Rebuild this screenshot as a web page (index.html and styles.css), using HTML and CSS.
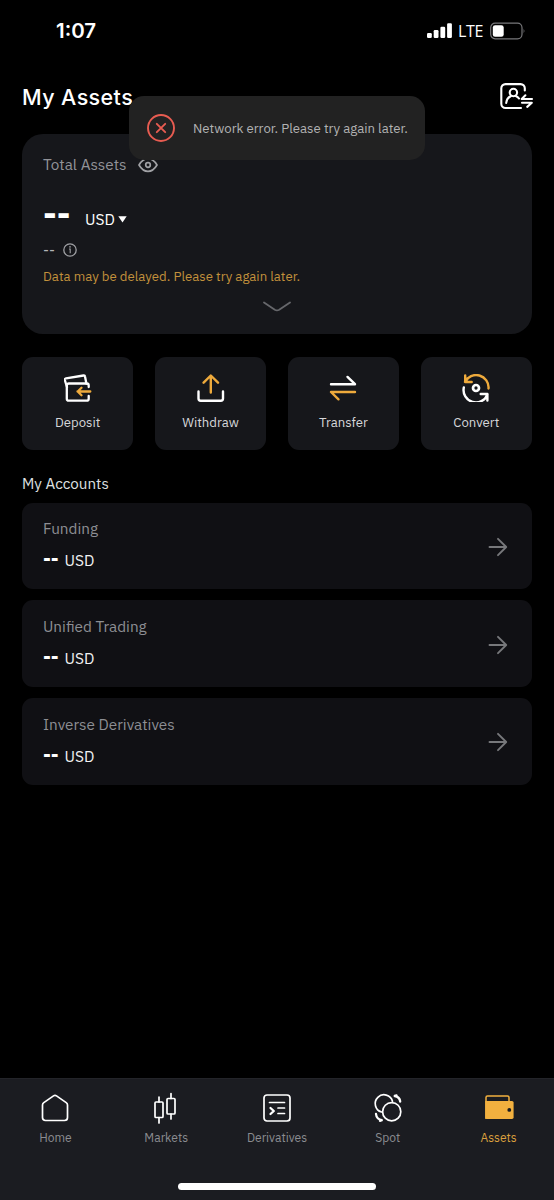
FILE: index.html
```
<!DOCTYPE html>
<html lang="en">
<head>
<meta charset="utf-8">
<title>My Assets</title>
<link rel="stylesheet" href="styles.css">
</head>
<body>
<div class="screen">
  <div class="status">
    <span class="time">1:07</span>
    <div class="signals">
      <svg width="26" height="18" viewBox="0 0 26 18" fill="#fff"><rect x="0" y="11" width="4.8" height="5" rx="1.2"/><rect x="6.7" y="8" width="4.8" height="8" rx="1.2"/><rect x="13.4" y="4.7" width="4.8" height="11.3" rx="1.2"/><rect x="20.1" y="1.2" width="4.8" height="14.8" rx="1.2"/></svg>
      <span class="lte">LTE</span>
      <svg width="36" height="18" viewBox="0 0 36 18"><rect x=".7" y="1.2" width="31.3" height="15.6" rx="4.5" fill="none" stroke="#77777a" stroke-width="1.2"/><rect x="2.8" y="3.2" width="10.9" height="11.6" rx="2.3" fill="#fff"/><path d="M33.6 6.5q1.8 2.500 0 5z" fill="#77777a"/></svg>
    </div>
  </div>

  <header class="header">
    <h1 class="title">My Assets</h1>
    <svg width="34" height="28" viewBox="0 0 34 28" fill="none" stroke="#fff" stroke-width="2.100" stroke-linecap="round" stroke-linejoin="round"><path d="M24.800 7.500V5.300a4.200 4.200 0 0 0-4.200-4.200H5.500a4.200 4.200 0 0 0-4.200 4.200v15.500a4.200 4.200 0 0 0 4.200 4.200H21"/><circle cx="13.400" cy="9.500" r="3.700"/><path d="M6.200 20c.3-3.300 1.800-5.600 4.800-7M15.800 13c1.500.6 2.400 1.300 3.200 2.500"/><path d="M25.400 12.300l-3.700 3.700H32M22 19.800h9.800l-4.600 4.100"/></svg>
  </header>

  <section class="balance">
    <div class="balance-label"><span class="total">Total Assets</span>
      <svg width="20" height="16" viewBox="0 0 20 16" fill="none" stroke="#a0a1a5" stroke-width="1.700"><path d="M1 8c2.600-4.400 5.600-6.400 9-6.400S16.400 3.600 19 8c-2.600 4.400-5.600 6.400-9 6.400S3.600 12.400 1 8z" stroke-linejoin="round"/><circle cx="10" cy="8" r="2.300"/></svg>
    </div>
    <div class="amount"><span class="amount-value">--</span><span class="currency">USD</span><svg width="9" height="7" viewBox="0 0 9 7"><path d="M.3.3h8.400L4.500 6.500z" fill="#fff"/></svg></div>
    <div class="secondary"><span class="secondary-value">--</span>
      <svg width="14" height="14" viewBox="0 0 14 14"><circle cx="7" cy="7" r="6.200" fill="none" stroke="#a0a1a5" stroke-width="1.300"/><path d="M6 6h1.200v4.200" fill="none" stroke="#a0a1a5" stroke-width="1.100"/><circle cx="7" cy="3.900" r=".8" fill="#a0a1a5"/></svg>
    </div>
    <p class="warning">Data may be delayed. Please try again later.</p>
    <svg class="expand" width="30" height="12" viewBox="0 0 30 12" fill="none" stroke="#66676b" stroke-width="1.900" stroke-linecap="round"><path d="M2 1.500l10.800 7.200q2.200 1.300 4.400 0L28 1.500"/></svg>
  </section>

  <section class="actions">
    <div class="action">
      <svg width="28" height="28" viewBox="0 0 28 28" fill="none" stroke="#fff" stroke-width="2.300" stroke-linecap="round" stroke-linejoin="round"><path d="M22.400 9.500L21 2.500q-.2-1.200-1.500-1L2 4.300q-1.500.3-1.200 1.700L3 13"/><path d="M24.700 13V11.500q0-2-2-2H4.800q-2 0-2 2v13.200q0 2 2 2h17.900q2 0 2-2V22"/><path d="M26.300 17.500H13.500M17.500 13.700l-3.800 3.800 3.800 3.800" stroke="#eeaa3c"/></svg>
      <span class="action-name">Deposit</span>
    </div>
    <div class="action">
      <svg width="28" height="28" viewBox="0 0 28 28" fill="none" stroke="#fff" stroke-width="2.400" stroke-linecap="round" stroke-linejoin="round"><path d="M1.500 17.500v7q0 2.200 2.200 2.200h20.100q2.200 0 2.200-2.200v-7"/><path d="M13.800 18.500V2M6.600 8.700l7.200-7.200 7.200 7.200" stroke="#eeaa3c"/></svg>
      <span class="action-name">Withdraw</span>
    </div>
    <div class="action">
      <svg width="28" height="28" viewBox="0 0 28 28" fill="none" stroke="#fff" stroke-width="2.400" stroke-linecap="round" stroke-linejoin="round"><path d="M2 10.200h24l-7.500-7.300"/><path d="M26 18H2l7.500 7.300" stroke="#eeaa3c"/></svg>
      <span class="action-name">Transfer</span>
    </div>
    <div class="action">
      <svg width="28" height="28" viewBox="0 0 28 28" fill="none" stroke="#fff" stroke-width="2.400" stroke-linecap="round" stroke-linejoin="round"><circle cx="14" cy="14" r="3" stroke-width="2.700"/><path d="M3 8A12.400 12.400 0 0 1 26.500 14.500M3.200 1.500V8h6.500" stroke="#eeaa3c"/><path d="M1.800 13.500A12.400 12.400 0 0 0 25.500 20.500M18.700 20h6.700v6.600"/></svg>
      <span class="action-name">Convert</span>
    </div>
  </section>

  <h2 class="accounts-title">My Accounts</h2>
  <section class="accounts">
    <div class="account">
      <div class="account-info"><span class="account-name">Funding</span><div class="account-value"><b class="dashes">--</b><span class="unit">USD</span></div></div>
      <svg width="20" height="20" viewBox="0 0 20 20" class="arrow"><path d="M1.500 10h16.500M10 1.800L18.200 10 10 18.200"/></svg>
    </div>
    <div class="account">
      <div class="account-info"><span class="account-name">Unified Trading</span><div class="account-value"><b class="dashes">--</b><span class="unit">USD</span></div></div>
      <svg width="20" height="20" viewBox="0 0 20 20" class="arrow"><path d="M1.500 10h16.500M10 1.800L18.200 10 10 18.200"/></svg>
    </div>
    <div class="account">
      <div class="account-info"><span class="account-name">Inverse Derivatives</span><div class="account-value"><b class="dashes">--</b><span class="unit">USD</span></div></div>
      <svg width="20" height="20" viewBox="0 0 20 20" class="arrow"><path d="M1.500 10h16.500M10 1.800L18.200 10 10 18.200"/></svg>
    </div>
  </section>

  <footer class="footer">
    <nav class="tabs">
      <div class="tab"><svg width="32" height="32" viewBox="0 0 32 32" class="tab-icon"><path d="M3.500 13q0-1.500 1.300-2.400l9.700-6.700q1.500-1 3 0l9.700 6.700q1.300.9 1.300 2.400v12.500q0 3-3 3h-19q-3 0-3-3z"/></svg><span>Home</span></div>
      <div class="tab"><svg width="32" height="32" viewBox="0 0 32 32" class="tab-icon"><rect x="5" y="10" width="8" height="15.500" rx="1"/><path d="M9 5v5M9 25.500V31M21 1.500v5M21 22v5"/><rect x="17" y="6.500" width="8" height="15.500" rx="1"/></svg><span>Markets</span></div>
      <div class="tab"><svg width="32" height="32" viewBox="0 0 32 32" class="tab-icon"><rect x="3" y="3" width="26" height="26" rx="3"/><path d="M8.500 10.500h15M17 16h6.500M17 21.500h6.500"/><path d="M9.500 16l3.300 3-3.300 3" stroke-width="2.300"/></svg><span>Derivatives</span></div>
      <div class="tab"><svg width="32" height="32" viewBox="0 0 32 32" class="tab-icon"><path d="M20.500 9.200A8.800 8.800 0 1 0 9.500 20"/><circle cx="19.700" cy="19.700" r="9.100"/><path d="M22.700 4q5 1 5.500 5.500M24.500 3.400l-1.800.6M4 22q.5 5 5.800 6.200M9.800 28.200l-1.800.6" stroke-width="2.300"/></svg><span>Spot</span></div>
      <div class="tab active"><svg width="32" height="32" viewBox="0 0 32 32" fill="#f2b03f"><path d="M3 27V5.500q0-1.500 1.500-1.500h20q1.500 0 1.500 1.500V9" fill="none" stroke="#f2b03f" stroke-width="1.500"/><path d="M2.200 9H29q1.600 0 1.600 1.600v14.700q0 1.600-1.600 1.600H3.800q-1.600 0-1.600-1.600z"/><circle cx="26.300" cy="17.900" r="1.900" fill="#191a1f"/></svg><span>Assets</span></div>
    </nav>
    <div class="home-indicator"></div>
  </footer>

  <div class="toast">
    <svg width="28" height="28" viewBox="0 0 28 28" fill="none" stroke="#e85c51" stroke-linecap="round"><circle cx="14" cy="14" r="13" stroke-width="1.900"/><path d="M9.800 9.800l8.400 8.400M18.200 9.800l-8.400 8.400" stroke-width="1.900"/></svg>
    <span class="toast-text">Network error. Please try again later.</span>
  </div>
</div>
</body>
</html>
```
FILE: styles.css
```
* { box-sizing: border-box; }
body { margin: 0; background: #000; }
svg { display: block; flex: none; }
.screen {
  position: relative;
  display: flex;
  flex-direction: column;
  width: 554px;
  height: 1200px;
  overflow: hidden;
  background: #000;
  color: #fff;
  font-family: "IBM Plex Sans", Roboto, "Noto Sans", sans-serif;
  white-space: nowrap;
}
.status {
  display: flex;
  justify-content: space-between;
  align-items: center;
  height: 62px;
  padding: 0 28px 0 56px;
}
.time { font: 600 20.500px/24px Inter, sans-serif; }
.signals { display: flex; align-items: center; }
.lte { width: 30px; margin: -1px 2px 0 5px; font: 500 16px/20px "Open Sans", sans-serif; letter-spacing: -.3px; }
.header {
  display: flex;
  justify-content: space-between;
  align-items: center;
  height: 72px;
  padding: 0 20px 2px 22px;
}
.title { margin: 0; font: 500 21.500px/28px Inter, sans-serif; letter-spacing: .4px; }
.balance {
  height: 200px;
  margin: 0 22px;
  padding: 19px 21px 0;
  border-radius: 21px;
  background: #16171b;
}
.balance-label { display: flex; align-items: center; gap: 12px; height: 23px; }
.total { margin-top: -1px; font-size: 15.300px; color: #929398; }
.amount { display: flex; align-items: center; height: 32px; margin-top: 27px; }
.amount-value { width: 42px; font-size: 34px; font-weight: 700; line-height: 32px; margin-top: -12px; }
.currency { margin: -1px 3px 0 0; font-size: 15.500px; }
.secondary { display: flex; align-items: center; gap: 8px; height: 20px; margin-top: 5px; }
.secondary-value { width: 12px; margin-top: -2px; font-size: 15px; color: #b4b5b8; }
.warning { margin: 6px 0 0; font-size: 13.200px; line-height: 20px; color: #c2913c; }
.expand { margin: 15px auto 0; }
.actions {
  display: grid;
  grid-template-columns: repeat(4, 1fr);
  gap: 21.500px;
  height: 93px;
  margin: 22.500px 22px 0;
}
.action {
  display: flex;
  flex-direction: column;
  align-items: center;
  gap: 10px;
  padding-top: 17.500px;
  border-radius: 11px;
  background: #16171b;
}
.action-name { font-size: 13.200px; line-height: 20px; color: #d5d6d9; }
.accounts-title { margin: 23px 22px 0; font-size: 15.200px; font-weight: 400; line-height: 20px; color: #dfe0e2; }
.accounts { display: flex; flex-direction: column; gap: 11px; margin: 10px 22px 0; }
.account {
  display: flex;
  justify-content: space-between;
  align-items: center;
  height: 86.700px;
  padding: 0 24px 0 21px;
  border-radius: 11px;
  background: #101014;
}
.arrow { margin-top: 2px; fill: none; stroke: #77787b; stroke-width: 1.900; stroke-linecap: round; stroke-linejoin: round; }
.account-info { display: flex; flex-direction: column; gap: 10px; margin-top: -3px; }
.account-name { font-size: 15.300px; line-height: 22px; color: #8d8e93; }
.account-value { display: flex; align-items: center; height: 22px; }
.dashes { width: 21.500px; margin-top: -2px; font-size: 19.500px; line-height: 22px; }
.unit { font-size: 15.500px; color: #f2f2f3; }
.footer {
  height: 122px;
  margin-top: auto;
  border-top: 1px solid #232429;
  background: #1b1c21;
}
.tabs { display: grid; grid-template-columns: repeat(5, 1fr); height: 104px; }
.tab {
  display: flex;
  flex-direction: column;
  align-items: center;
  gap: 5px;
  padding-top: 13px;
  font-size: 12.100px;
  line-height: 18px;
  color: #8b8c91;
}
.tab.active { color: #dba03e; }
.tab-icon { fill: none; stroke: #fff; stroke-width: 1.700; stroke-linecap: round; stroke-linejoin: round; }
.home-indicator { width: 198px; height: 7px; margin: 0 auto; border-radius: 4px; background: #fff; }
.toast {
  position: absolute;
  top: 96px;
  left: 129px;
  display: flex;
  align-items: center;
  gap: 18px;
  width: 296px;
  height: 64px;
  padding-left: 18px;
  border-radius: 15px;
  background: #222;
}
.toast-text { font-size: 13.200px; color: #b2b2b3; }
```
